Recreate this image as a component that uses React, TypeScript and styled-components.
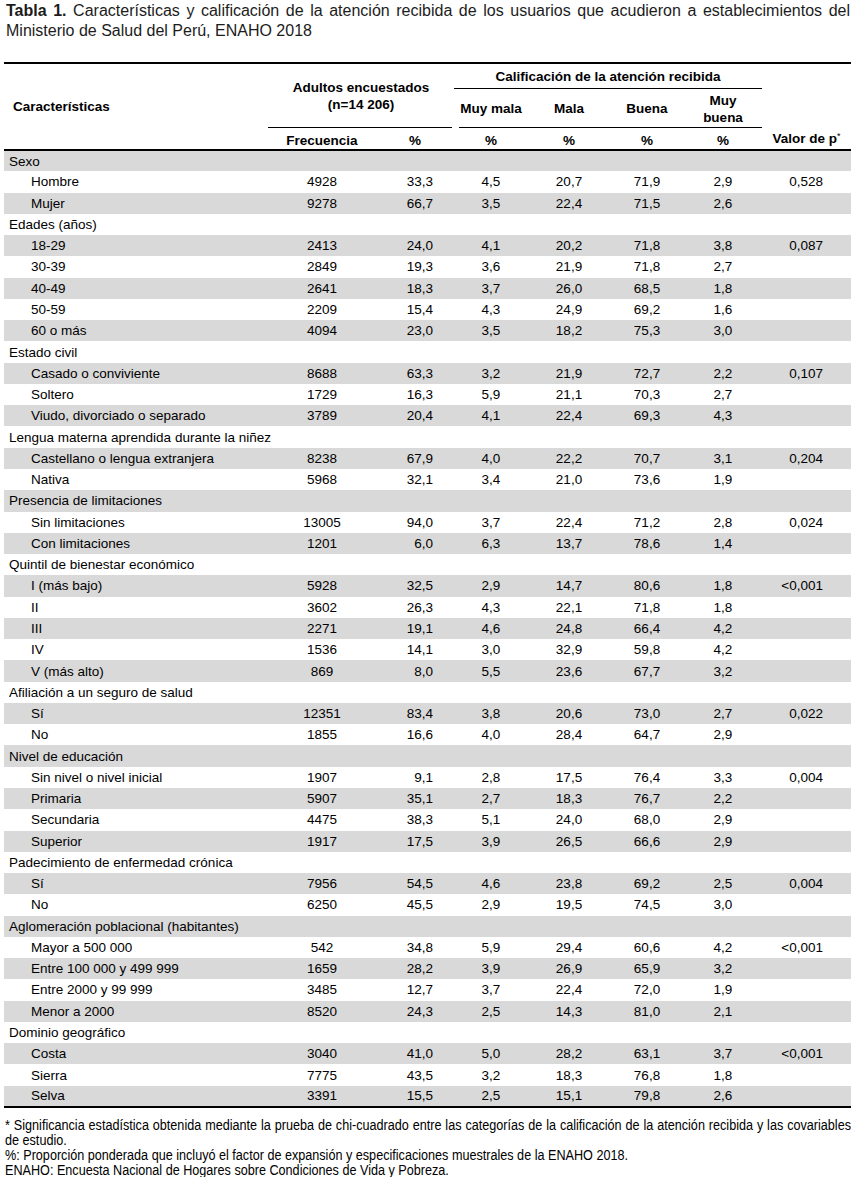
import React from "react"
import styled, { createGlobalStyle } from "styled-components"

type Item = [string, string, string, string, string, string, string]

interface Group {
  title: string
  p: string
  rows: Item[]
}

const groups: Group[] = [
  {
    title: "Sexo",
    p: "0,528",
    rows: [
      ["Hombre", "4928", "33,3", "4,5", "20,7", "71,9", "2,9"],
      ["Mujer", "9278", "66,7", "3,5", "22,4", "71,5", "2,6"],
    ],
  },
  {
    title: "Edades (años)",
    p: "0,087",
    rows: [
      ["18-29", "2413", "24,0", "4,1", "20,2", "71,8", "3,8"],
      ["30-39", "2849", "19,3", "3,6", "21,9", "71,8", "2,7"],
      ["40-49", "2641", "18,3", "3,7", "26,0", "68,5", "1,8"],
      ["50-59", "2209", "15,4", "4,3", "24,9", "69,2", "1,6"],
      ["60 o más", "4094", "23,0", "3,5", "18,2", "75,3", "3,0"],
    ],
  },
  {
    title: "Estado civil",
    p: "0,107",
    rows: [
      ["Casado o conviviente", "8688", "63,3", "3,2", "21,9", "72,7", "2,2"],
      ["Soltero", "1729", "16,3", "5,9", "21,1", "70,3", "2,7"],
      ["Viudo, divorciado o separado", "3789", "20,4", "4,1", "22,4", "69,3", "4,3"],
    ],
  },
  {
    title: "Lengua materna aprendida durante la niñez",
    p: "0,204",
    rows: [
      ["Castellano o lengua extranjera", "8238", "67,9", "4,0", "22,2", "70,7", "3,1"],
      ["Nativa", "5968", "32,1", "3,4", "21,0", "73,6", "1,9"],
    ],
  },
  {
    title: "Presencia de limitaciones",
    p: "0,024",
    rows: [
      ["Sin limitaciones", "13005", "94,0", "3,7", "22,4", "71,2", "2,8"],
      ["Con limitaciones", "1201", "6,0", "6,3", "13,7", "78,6", "1,4"],
    ],
  },
  {
    title: "Quintil de bienestar económico",
    p: "<0,001",
    rows: [
      ["I (más bajo)", "5928", "32,5", "2,9", "14,7", "80,6", "1,8"],
      ["II", "3602", "26,3", "4,3", "22,1", "71,8", "1,8"],
      ["III", "2271", "19,1", "4,6", "24,8", "66,4", "4,2"],
      ["IV", "1536", "14,1", "3,0", "32,9", "59,8", "4,2"],
      ["V (más alto)", "869", "8,0", "5,5", "23,6", "67,7", "3,2"],
    ],
  },
  {
    title: "Afiliación a un seguro de salud",
    p: "0,022",
    rows: [
      ["Sí", "12351", "83,4", "3,8", "20,6", "73,0", "2,7"],
      ["No", "1855", "16,6", "4,0", "28,4", "64,7", "2,9"],
    ],
  },
  {
    title: "Nivel de educación",
    p: "0,004",
    rows: [
      ["Sin nivel o nivel inicial", "1907", "9,1", "2,8", "17,5", "76,4", "3,3"],
      ["Primaria", "5907", "35,1", "2,7", "18,3", "76,7", "2,2"],
      ["Secundaria", "4475", "38,3", "5,1", "24,0", "68,0", "2,9"],
      ["Superior", "1917", "17,5", "3,9", "26,5", "66,6", "2,9"],
    ],
  },
  {
    title: "Padecimiento de enfermedad crónica",
    p: "0,004",
    rows: [
      ["Sí", "7956", "54,5", "4,6", "23,8", "69,2", "2,5"],
      ["No", "6250", "45,5", "2,9", "19,5", "74,5", "3,0"],
    ],
  },
  {
    title: "Aglomeración poblacional (habitantes)",
    p: "<0,001",
    rows: [
      ["Mayor a 500 000", "542", "34,8", "5,9", "29,4", "60,6", "4,2"],
      ["Entre 100 000 y 499 999", "1659", "28,2", "3,9", "26,9", "65,9", "3,2"],
      ["Entre 2000 y 99 999", "3485", "12,7", "3,7", "22,4", "72,0", "1,9"],
      ["Menor a 2000", "8520", "24,3", "2,5", "14,3", "81,0", "2,1"],
    ],
  },
  {
    title: "Dominio geográfico",
    p: "<0,001",
    rows: [
      ["Costa", "3040", "41,0", "5,0", "28,2", "63,1", "3,7"],
      ["Sierra", "7775", "43,5", "3,2", "18,3", "76,8", "1,8"],
      ["Selva", "3391", "15,5", "2,5", "15,1", "79,8", "2,6"],
    ],
  },
]

// widths of the eight columns, left to right
const colWidths = [264, 108, 78, 74, 82, 74, 78, 89]

// the notes use a narrow face; no narrow font is installed, so squeeze a regular one
const NARROW = 0.82

const App = () => {
  return (
    <Page>
      <GlobalStyle />
      <Caption>
        <CaptionLabel>Tabla 1.</CaptionLabel>
        <span>
          {" "}
          Características y calificación de la atención recibida de los usuarios que acudieron a establecimientos
          del Ministerio de Salud del Perú, ENAHO 2018
        </span>
      </Caption>

      <Table>
        <colgroup>
          {colWidths.map((w, i) => (
            <col key={i} style={{ width: w }} />
          ))}
        </colgroup>
        <thead>
          <HeadRow $h={26}>
            <HeadCell rowSpan={3} $align="left" $padLeft={9}>
              Características
            </HeadCell>
            <HeadCell colSpan={2} rowSpan={2} $rule $insetRight={2}>
              Adultos encuestados
              <br />
              (n=14 206)
            </HeadCell>
            <HeadCell colSpan={4} $rule>
              Calificación de la atención recibida
            </HeadCell>
            <HeadCell rowSpan={3} $valign="bottom" $padBottom={2}>
              Valor de p<Star>*</Star>
            </HeadCell>
          </HeadRow>
          <HeadRow $h={39}>
            <HeadCell $rule $insetLeft={5}>Muy mala</HeadCell>
            <HeadCell $rule>Mala</HeadCell>
            <HeadCell $rule>Buena</HeadCell>
            <HeadCell $rule>
              Muy
              <br />
              buena
            </HeadCell>
          </HeadRow>
          <HeadRow $h={22}>
            <HeadCell $padTop={3}>Frecuencia</HeadCell>
            <HeadCell $padTop={3}>%</HeadCell>
            <HeadCell $padTop={3}>%</HeadCell>
            <HeadCell $padTop={3}>%</HeadCell>
            <HeadCell $padTop={3}>%</HeadCell>
            <HeadCell $padTop={3}>%</HeadCell>
          </HeadRow>
        </thead>
        <tbody>
          {groups.map((g) => (
            <React.Fragment key={g.title}>
              <BodyRow>
                <LabelCell colSpan={8}>{g.title}</LabelCell>
              </BodyRow>
              {g.rows.map((r, i) => (
                <BodyRow key={g.title + r[0]}>
                  <LabelCell $sub>{r[0]}</LabelCell>
                  <NumCell>{r[1]}</NumCell>
                  <NumCell $align="right" $padRight={21}>
                    {r[2]}
                  </NumCell>
                  <NumCell>{r[3]}</NumCell>
                  <NumCell>{r[4]}</NumCell>
                  <NumCell>{r[5]}</NumCell>
                  <NumCell>{r[6]}</NumCell>
                  <NumCell $align="right" $padRight={28}>
                    {i === 0 ? g.p : ""}
                  </NumCell>
                </BodyRow>
              ))}
            </React.Fragment>
          ))}
        </tbody>
      </Table>

      <NotesClip>
        <Notes>
          <NoteJustified>
            * Significancia estadística obtenida mediante la prueba de chi-cuadrado entre las categorías de la
            calificación de la atención recibida y las covariables de estudio.
          </NoteJustified>
          <Note>
            %: Proporción ponderada que incluyó el factor de expansión y especificaciones muestrales de la ENAHO 2018.
          </Note>
          <Note>ENAHO: Encuesta Nacional de Hogares sobre Condiciones de Vida y Pobreza.</Note>
        </Notes>
      </NotesClip>
    </Page>
  )
}

const GlobalStyle = createGlobalStyle`
  body {
    margin: 0;
    background: #fff;
    overflow-x: hidden;
  }
`

const Page = styled.div`
  width: 847px;
  padding: 1px 5px 0 4px;
  font-family: "Liberation Sans", Arial, sans-serif;
  color: #000;
`

const Caption = styled.p`
  margin: 0 1px 0 2px;
  font-size: 16px;
  line-height: 20px;
  text-align: justify;
  color: #1c1c1c;
`

const CaptionLabel = styled.b`
  font-weight: bold;
`

const Table = styled.table`
  margin-top: 21px;
  width: 847px;
  table-layout: fixed;
  border-collapse: collapse;
  border-top: 2px solid #000;
  border-bottom: 2px solid #000;
  font-size: 13.5px;
  line-height: 17px;

  thead {
    border-bottom: 2px solid #000;
  }

  tbody tr:nth-child(odd) {
    background: #d9d9d9;
  }
`

const HeadRow = styled.tr<{ $h: number }>`
  height: ${({ $h }) => $h}px;
`

const HeadCell = styled.th<{
  $align?: "left" | "center"
  $valign?: "middle" | "bottom"
  $rule?: boolean
  $insetLeft?: number
  $insetRight?: number
  $padLeft?: number
  $padTop?: number
  $padBottom?: number
}>`
  padding: ${({ $padTop = 0, $padBottom = 0, $padLeft = 0 }) => `${$padTop}px 0 ${$padBottom}px ${$padLeft}px`};
  text-align: ${({ $align = "center" }) => $align};
  vertical-align: ${({ $valign = "middle" }) => $valign};
  font-weight: bold;
  color: #000;
  background: ${({ $rule, $insetLeft = 0, $insetRight = 0 }) =>
    $rule
      ? `linear-gradient(#000, #000) no-repeat ${$insetLeft}px 100% / calc(100% - ${$insetLeft + $insetRight}px) 1px`
      : "none"};
`

const Star = styled.span`
  font-size: 9px;
  font-weight: normal;
  vertical-align: top;
  line-height: 12px;
`

const BodyRow = styled.tr`
  height: 21.27px;
`

const LabelCell = styled.td<{ $sub?: boolean }>`
  padding: 0 0 0 ${({ $sub }) => ($sub ? 27 : 5)}px;
  text-align: left;
  vertical-align: middle;
  white-space: nowrap;
`

const NumCell = styled.td<{ $align?: "center" | "right"; $padRight?: number }>`
  padding: 0 ${({ $padRight = 0 }) => $padRight}px 0 0;
  text-align: ${({ $align = "center" }) => $align};
  vertical-align: middle;
`

const NotesClip = styled.div`
  margin: 9px 0 0 1px;
  width: 846px;
  overflow: hidden;
`

const Notes = styled.div`
  width: ${846 / NARROW}px;
  transform: scaleX(${NARROW});
  transform-origin: left top;
  font-family: "Liberation Sans", Arial, sans-serif;
  font-size: 15.4px;
  line-height: 15px;
  color: #000;
`

const Note = styled.p`
  margin: 0;
`

const NoteJustified = styled(Note)`
  text-align: justify;
`

export default App
